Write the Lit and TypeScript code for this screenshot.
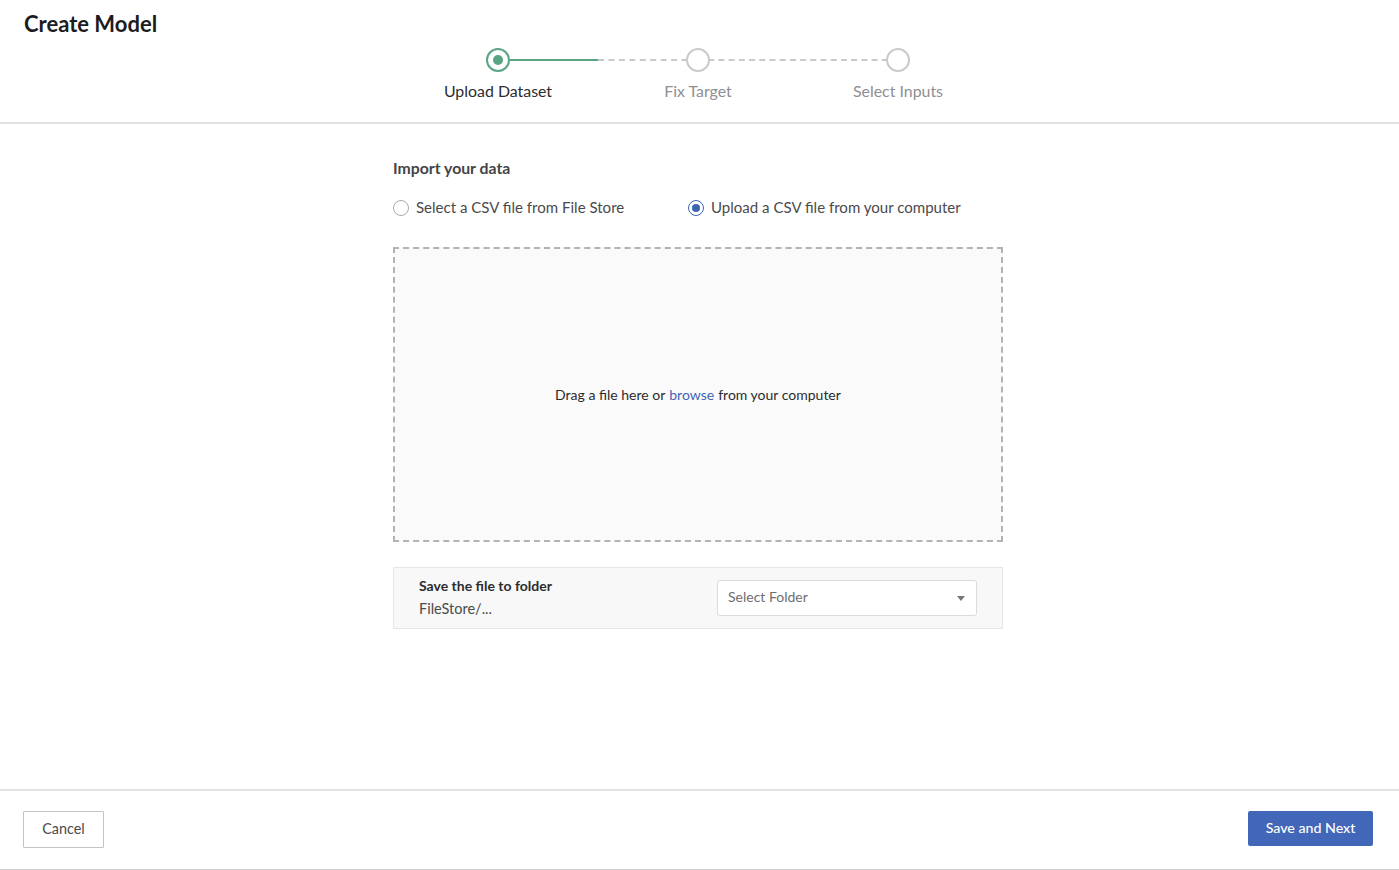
import { html, css, LitElement } from 'lit';
import { customElement } from 'lit/decorators.js';

@customElement('app-root')
export class AppRoot extends LitElement {
  static styles = css`
    :host {
      display: flex;
      flex-direction: column;
      height: 870px;
      background: #fff;
      font-family: "Lato", "Liberation Sans", sans-serif;
      color: #3a3a3c;
      overflow: hidden;
    }
    .header {
      height: 122px;
      border-bottom: 2px solid #e2e2e2;
      box-sizing: content-box;
      display: flex;
      flex-direction: column;
      flex: none;
    }
    .title {
      margin: 11px 0 0 24px;
      font-size: 22px;
      line-height: 26px;
      font-weight: 700;
      color: #1c1c1e;
    }
    .steps {
      display: flex;
      justify-content: center;
      padding-right: 3px;
      margin-top: 11px;
    }
    .step {
      width: 200px;
      display: flex;
      flex-direction: column;
      align-items: center;
      position: relative;
    }
    .dot {
      width: 24px;
      height: 24px;
      box-sizing: border-box;
      border: 2px solid #cbcbcd;
      border-radius: 50%;
      background: #fff;
      display: flex;
      align-items: center;
      justify-content: center;
      z-index: 1;
    }
    .step.active .dot {
      border-color: #58a583;
    }
    .step.active .dot::after {
      content: "";
      width: 10px;
      height: 10px;
      border-radius: 50%;
      background: #58a583;
    }
    .line {
      position: absolute;
      top: 11px;
      left: 100px;
      width: 200px;
      border-top: 2px dashed #c9c9cb;
    }
    .line.half {
      width: 100px;
      left: 100px;
      border-top: 2px solid #58a583;
    }
    .line.rest {
      width: 100px;
      left: 200px;
    }
    .label {
      margin-top: 9px;
      font-size: 15.9px;
      line-height: 20px;
      color: #8e8e93;
    }
    .step.active .label {
      color: #2c2c2e;
    }
    .main {
      flex: 1;
      display: flex;
      justify-content: center;
      padding-right: 3px;
    }
    .content {
      width: 610px;
      padding-top: 33px;
    }
    h2 {
      margin: 0;
      font-size: 15.8px;
      line-height: 22px;
      font-weight: 700;
      color: #444446;
    }
    .radios {
      display: flex;
      margin-top: 17px;
      height: 24px;
      align-items: center;
    }
    .radio {
      display: flex;
      align-items: center;
      gap: 7px;
      font-size: 15.05px;
      line-height: 16px;
      color: #4a4a4c;
    }
    .radio span {
      padding-bottom: 2px;
    }
    .radio.first {
      width: 295px;
    }
    .circle {
      width: 16px;
      height: 16px;
      box-sizing: border-box;
      border: 1px solid #a9a9ac;
      border-radius: 50%;
      display: flex;
      align-items: center;
      justify-content: center;
    }
    .radio.on .circle {
      border-color: #3f66b5;
    }
    .radio.on .circle::after {
      content: "";
      width: 8px;
      height: 8px;
      border-radius: 50%;
      background: #3f66b5;
    }
    .drop {
      margin-top: 27px;
      height: 295px;
      box-sizing: border-box;
      border: 2px dashed #b3b3b5;
      background: #fafafa;
      display: flex;
      align-items: center;
      justify-content: center;
      font-size: 14px;
      color: #2c2c2e;
    }
    .drop a {
      color: #3f66b5;
      margin: 0 4px;
    }
    .save {
      margin-top: 25px;
      height: 62px;
      box-sizing: border-box;
      border: 1px solid #e6e6e6;
      background: #f8f8f8;
      display: flex;
      align-items: center;
      justify-content: space-between;
      padding: 0 25px;
    }
    .save-text {
      padding-bottom: 2px;
    }
    .save b {
      display: block;
      font-size: 14px;
      line-height: 20px;
      color: #2c2c2e;
    }
    .save span {
      display: block;
      margin-top: 3px;
      font-size: 14.5px;
      line-height: 20px;
      color: #4a4a4c;
    }
    .select {
      width: 260px;
      height: 36px;
      box-sizing: border-box;
      background: #fff;
      border: 1px solid #dcdcdc;
      border-radius: 3px;
      display: flex;
      align-items: center;
      justify-content: space-between;
      padding: 0 11px 4px 10px;
      font-size: 14px;
      color: #6e6e70;
    }
    .caret {
      width: 0;
      height: 0;
      border-left: 4.5px solid transparent;
      border-right: 4.5px solid transparent;
      border-top: 5px solid #77777a;
      margin-top: 4px;
    }
    .footer {
      flex: none;
      height: 58px;
      border-top: 2px solid #e4e4e4;
      border-bottom: 1px solid #cfcfd1;
      display: flex;
      align-items: flex-start;
      justify-content: space-between;
      padding: 20px 26px 0 23px;
      box-sizing: content-box;
    }
    button {
      font-family: inherit;
      border-radius: 1px;
      padding: 0 0 2px;
      cursor: pointer;
    }
    .cancel {
      width: 81px;
      height: 37px;
      font-size: 14.4px;
      background: #fff;
      border: 1px solid #c4c4c6;
      color: #4a4a4c;
    }
    .next {
      width: 125px;
      height: 35px;
      font-size: 14.2px;
      background: #4267b9;
      border: none;
      border-radius: 2px;
      color: #fff;
      font-weight: 500;
    }
  `;

  render() {
    return html`
      <div class="header">
        <div class="title">Create Model</div>
        <div class="steps">
          <div class="step active">
            <div class="line half"></div>
            <div class="line rest"></div>
            <div class="dot"></div>
            <div class="label">Upload Dataset</div>
          </div>
          <div class="step">
            <div class="line"></div>
            <div class="dot"></div>
            <div class="label">Fix Target</div>
          </div>
          <div class="step">
            <div class="dot"></div>
            <div class="label">Select Inputs</div>
          </div>
        </div>
      </div>
      <div class="main">
        <div class="content">
          <h2>Import your data</h2>
          <div class="radios">
            <label class="radio first"><i class="circle"></i><span>Select a CSV file from File Store</span></label>
            <label class="radio on"><i class="circle"></i><span>Upload a CSV file from your computer</span></label>
          </div>
          <div class="drop">Drag a file here or <a>browse</a> from your computer</div>
          <div class="save">
            <div class="save-text">
              <b>Save the file to folder</b>
              <span>FileStore/...</span>
            </div>
            <div class="select">Select Folder<i class="caret"></i></div>
          </div>
        </div>
      </div>
      <div class="footer">
        <button class="cancel">Cancel</button>
        <button class="next">Save and Next</button>
      </div>
    `;
  }
}
